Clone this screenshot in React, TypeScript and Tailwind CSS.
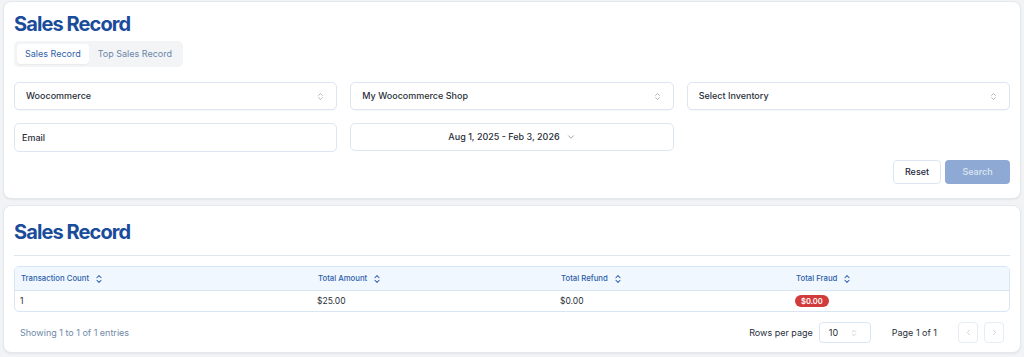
import React from "react";
import { ChevronsUpDown, ChevronDown, ChevronLeft, ChevronRight } from "lucide-react";

function SelectBox({ label }: { label: string }) {
  return (
    <div className="flex h-[28px] items-center justify-between rounded-[5px] border border-[#dbe6f2] bg-white pl-[11px] pr-[11px] shadow-[0_1px_1px_rgba(0,0,0,0.03)]">
      <span className="text-[9px] font-medium text-[#2a2f3a]">{label}</span>
      <ChevronsUpDown className="h-[9px] w-[9px] text-[#9aa3ae]" strokeWidth={2} />
    </div>
  );
}

function SortHead({ label }: { label: string }) {
  return (
    <div className="flex items-center gap-[5px]">
      <span>{label}</span>
      <ChevronsUpDown className="h-[10px] w-[10px] text-[#2d5fa8]" strokeWidth={2.5} />
    </div>
  );
}

export default function App() {
  return (
    <div
      className="flex min-h-[357px] w-[1024px] flex-col gap-[6px] bg-[#f1f3f5] px-[3px] pt-px"
      style={{ fontFamily: "Inter, 'Noto Sans', sans-serif" }}
    >
      <div className="flex h-[198px] flex-col rounded-[8px] border border-[#e3e8ee] bg-white px-[10px] shadow-[0_1px_2px_rgba(0,0,0,0.06)]">
        <h1 className="mt-[8px] text-[20px] font-bold leading-[28px] tracking-[-0.045em] text-[#1a4c9b]">Sales Record</h1>
        <div className="mt-[3px] flex h-[26px] w-[169px] items-center gap-[1px] whitespace-nowrap rounded-[5px] bg-[#f3f4f6] px-[3px]">
          <div className="flex h-[20px] w-[72px] items-center justify-center rounded-[4px] bg-white text-[9px] text-[#2d5fa8] shadow-[0_1px_1px_rgba(0,0,0,0.04)]">
            Sales Record
          </div>
          <div className="flex h-[20px] items-center px-[8px] text-[9px] text-[#6a86a8]">Top Sales Record</div>
        </div>
        <div className="mt-[15px] grid grid-cols-3 gap-x-[13px] gap-y-[13px]">
          <SelectBox label="Woocommerce" />
          <SelectBox label="My Woocommerce Shop" />
          <SelectBox label="Select Inventory" />
          <div className="flex h-[29px] items-center rounded-[5px] border border-[#dbe6f2] bg-white px-[7px] text-[9px] font-medium text-[#2a2f3a]">
            Email
          </div>
          <div className="flex h-[28px] items-center justify-center gap-[6px] rounded-[5px] border border-[#dbe6f2] bg-white text-[9px] font-medium text-[#2a2f3a]">
            <span>Aug 1, 2025 - Feb 3, 2026</span>
            <ChevronDown className="h-[10px] w-[10px] text-[#7d8692]" strokeWidth={1.75} />
          </div>
        </div>
        <div className="mt-[8px] flex justify-end gap-[4px]">
          <button className="flex h-[24px] w-[48px] items-center justify-center rounded-[4px] border border-[#dbe6f2] bg-white text-[9px] font-medium text-[#1f2937]">
            Reset
          </button>
          <button className="flex h-[24px] w-[65px] items-center justify-center rounded-[4px] bg-[#8eaad4] text-[9px] font-medium text-[#dde6f3]">
            Search
          </button>
        </div>
      </div>

      <div className="flex h-[148px] flex-col rounded-[8px] border border-[#e3e8ee] bg-white px-[10px] shadow-[0_1px_2px_rgba(0,0,0,0.06)]">
        <h2 className="mt-[12px] text-[20px] font-bold leading-[28px] tracking-[-0.045em] text-[#1a4c9b]">Sales Record</h2>
        <div className="mt-[9px] h-px bg-[#dde7f1]" />
        <div className="mt-[10px] overflow-hidden rounded-[5px] border border-[#d8e6f4]">
          <div className="grid h-[24px] grid-cols-[297px_243px_235px_1fr] items-center border-b border-[#d8e6f4] bg-[#f0f7ff] text-[7.75px] font-medium text-[#2d5fa8]">
            <div className="pl-[6px]"><SortHead label="Transaction Count" /></div>
            <div className="pl-[6px]"><SortHead label="Total Amount" /></div>
            <div className="pl-[6px]"><SortHead label="Total Refund" /></div>
            <div className="pl-[6px]"><SortHead label="Total Fraud" /></div>
          </div>
          <div className="grid h-[20px] grid-cols-[297px_243px_235px_1fr] items-center text-[8.5px] text-[#2a2f3a]">
            <div className="pl-[5px]">1</div>
            <div className="pl-[5px]">$25.00</div>
            <div className="pl-[5px]">$0.00</div>
            <div className="pl-[5px]">
              <span className="inline-flex h-[12px] items-center rounded-full bg-[#d23b3b] px-[6px] text-[7.5px] font-semibold text-white">$0.00</span>
            </div>
          </div>
        </div>
        <div className="mt-[10px] flex items-center justify-between pl-[6px] pr-[6px]">
          <span className="text-[9px] text-[#6f89a7]">Showing 1 to 1 of 1 entries</span>
          <div className="flex items-center">
            <span className="text-[9px] text-[#2a2f3a]">Rows per page</span>
            <div className="ml-[6px] flex h-[21px] w-[52px] items-center justify-between rounded-[4px] border border-[#d8e6f4] bg-white pl-[9px] pr-[12px] text-[9px] text-[#2a2f3a]">
              <span>10</span>
              <ChevronsUpDown className="h-[8px] w-[8px] text-[#a0a8b2]" strokeWidth={1.5} />
            </div>
            <span className="ml-[21px] text-[9px] text-[#2a2f3a]">Page 1 of 1</span>
            <div className="ml-[21px] flex gap-[6px]">
              <div className="flex h-[21px] w-[20px] items-center justify-center rounded-[4px] border border-[#e5edf5] bg-white">
                <ChevronLeft className="h-[9px] w-[9px] text-[#a9b1ba]" strokeWidth={1.5} />
              </div>
              <div className="flex h-[21px] w-[20px] items-center justify-center rounded-[4px] border border-[#e5edf5] bg-white">
                <ChevronRight className="h-[9px] w-[9px] text-[#a9b1ba]" strokeWidth={1.5} />
              </div>
            </div>
          </div>
        </div>
      </div>
    </div>
  );
}
